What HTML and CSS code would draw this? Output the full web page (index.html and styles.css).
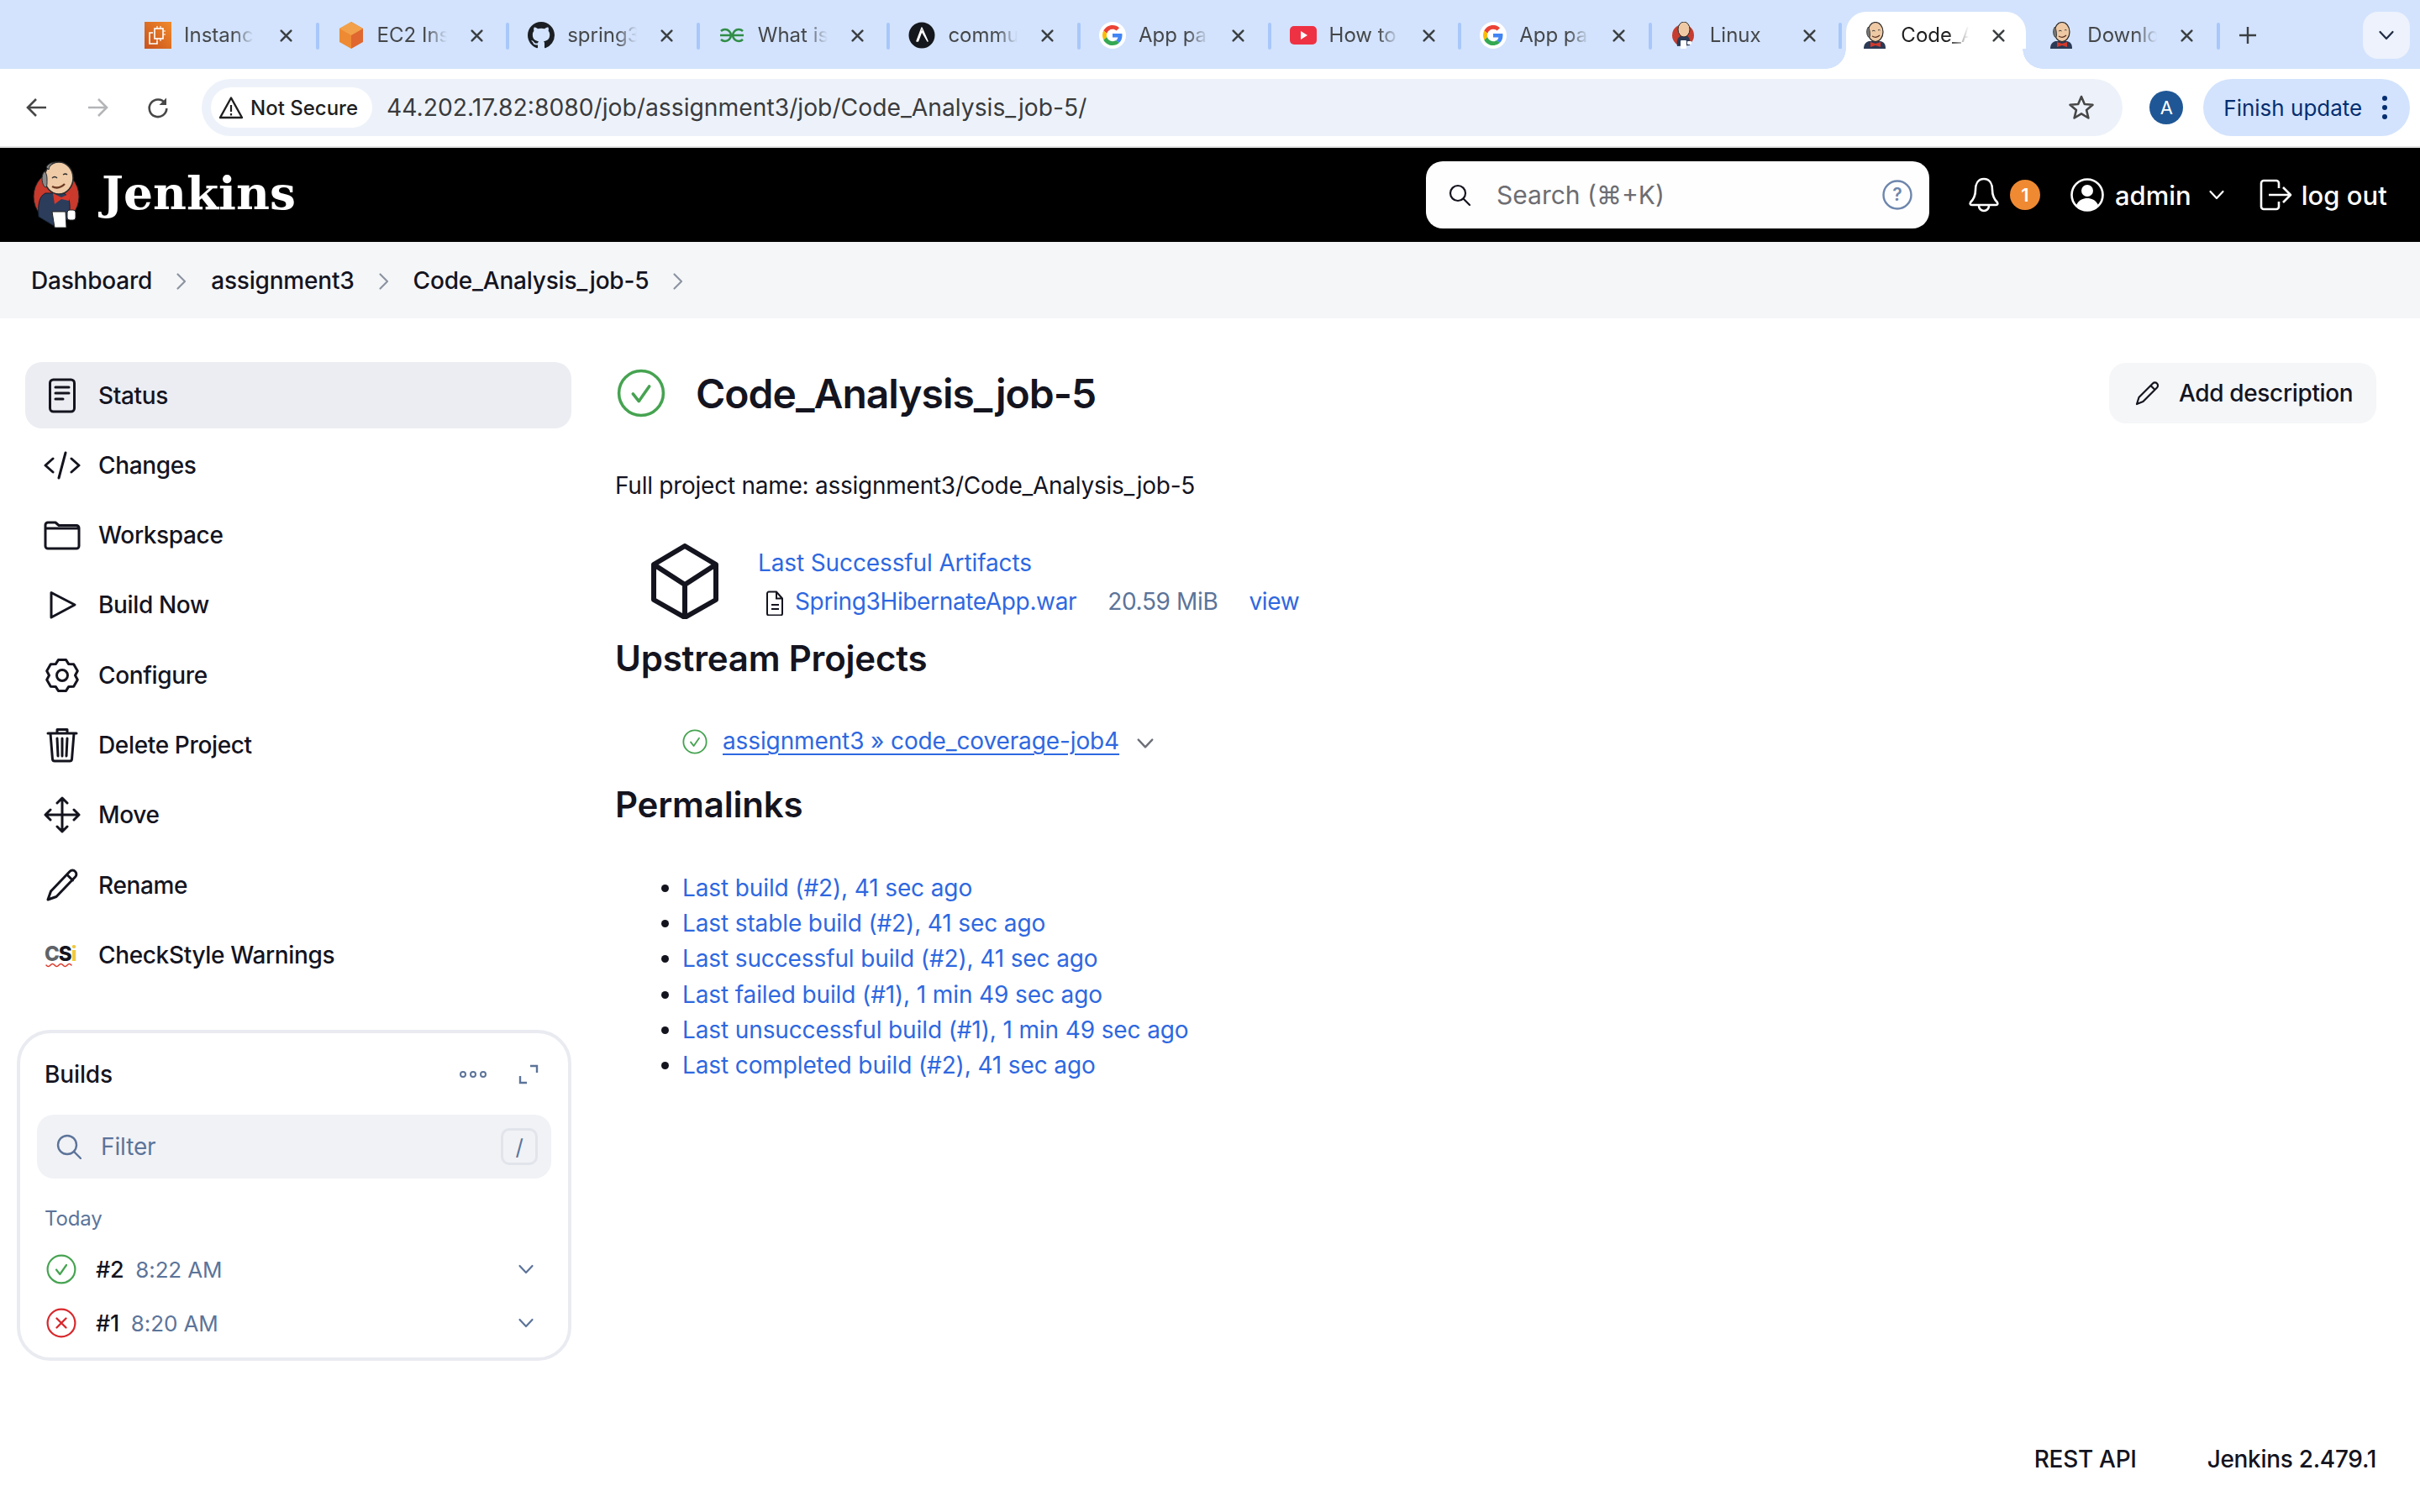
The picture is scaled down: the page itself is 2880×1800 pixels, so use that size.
FILE: index.html
```html
<!DOCTYPE html>
<html lang="en">
<head>
<meta charset="utf-8">
<title>Code_Analysis_job-5 - Jenkins</title>
<link rel="stylesheet" href="styles.css">
</head>
<body>
<svg class="defs" width="0" height="0" aria-hidden="true">
  <symbol id="butler-face" viewBox="0 0 32 32">
    <path d="M3 32c0-6 3-8 6-9h14c4 1 6 3 6 9z" fill="#2b3a55"/>
    <ellipse cx="17" cy="12" rx="9" ry="11.500" fill="#eec9a4" stroke="#2a2a2a" stroke-width="1.200"/>
    <path d="M8.500 6c-2.500 3-2.500 9 0 12 1 1 2 0 2-2 0-4-.5-7-2-10z" fill="#777" stroke="#2a2a2a" stroke-width=".8"/>
    <path d="M13 11q2-1.500 3.500 0M20 10q1.500-1 2.500 0" fill="none" stroke="#2a2a2a" stroke-width=".9"/>
    <path d="M13 17q5 3 9-1" fill="none" stroke="#5a3020" stroke-width="1.200"/>
    <path d="M11 24l6 2 6-2v6l-6-2-6 2z" fill="#d33a2c"/>
  </symbol>
  <symbol id="butler-red" viewBox="0 0 32 32">
    <ellipse cx="15" cy="16" rx="13" ry="13" fill="#c53d30"/>
    <path d="M8 29c-1-5 0-10 4-12h8c3 2 4 6 3 11z" fill="#2b3a55"/>
    <ellipse cx="16" cy="9" rx="7" ry="9" fill="#eec9a4" stroke="#2a2a2a"/>
    <rect x="12" y="22" width="7" height="10" rx="1" fill="#fff"/>
    <rect x="20" y="23" width="5" height="4" rx="1" fill="#fff"/>
  </symbol>
  <symbol id="google" viewBox="-8 -8 64 64">
    <circle cx="24" cy="24" r="32" fill="#fff"/>
    <path fill="#EA4335" d="M24 9.5c3.54 0 6.71 1.22 9.21 3.6l6.85-6.85C35.9 2.38 30.47 0 24 0 14.62 0 6.51 5.38 2.56 13.22l7.98 6.19C12.43 13.72 17.74 9.5 24 9.5z"/>
    <path fill="#4285F4" d="M46.98 24.55c0-1.57-.15-3.09-.38-4.55H24v9.02h12.94c-.58 2.96-2.26 5.48-4.78 7.18l7.73 6c4.51-4.18 7.09-10.36 7.09-17.65z"/>
    <path fill="#FBBC05" d="M10.53 28.59c-.48-1.45-.76-2.99-.76-4.59s.27-3.14.76-4.59l-7.98-6.19C.92 16.46 0 20.12 0 24c0 3.88.92 7.54 2.56 10.78l7.97-6.19z"/>
    <path fill="#34A853" d="M24 48c6.48 0 11.93-2.13 15.89-5.81l-7.73-6c-2.15 1.45-4.92 2.3-8.16 2.3-6.26 0-11.57-4.22-13.47-9.91l-7.98 6.19C6.51 42.62 14.62 48 24 48z"/>
  </symbol>
  <symbol id="ok-circle" viewBox="0 0 36 36">
    <circle cx="18" cy="18" r="16.400" fill="none" stroke="#46a351" stroke-width="2.200"/>
    <path d="M12 18.500l4.300 5.500 7.700-11" fill="none" stroke="#46a351" stroke-width="2.200" stroke-linecap="round" stroke-linejoin="round"/>
  </symbol>
  <symbol id="close-x" viewBox="0 0 16 16">
    <path d="M2.500 2.500l11 11M13.500 2.500l-11 11" fill="none" stroke="#3c4043" stroke-width="2.400" stroke-linecap="round"/>
  </symbol>
  <symbol id="chev" viewBox="0 0 20 20">
    <path d="M2.500 6l7.500 8 7.500-8" fill="none" stroke="currentColor" stroke-width="2.200" stroke-linecap="round" stroke-linejoin="round"/>
  </symbol>
  <symbol id="crumb" viewBox="0 0 14 22">
    <path d="M2.500 2.500L11 11l-8.500 8.500" fill="none" stroke="#8c94a1" stroke-width="2.200" stroke-linecap="round" stroke-linejoin="round"/>
  </symbol>
</svg>

<div class="tabstrip">
  <div class="tab tab-first"><svg class="fav" viewBox="0 0 32 32"><defs><linearGradient id="aws" x1="0" y1="1" x2="1" y2="0"><stop offset="0" stop-color="#c8511b"/><stop offset="1" stop-color="#f08a2c"/></linearGradient></defs><rect width="32" height="32" fill="url(#aws)"/><rect x="12" y="8" width="10" height="12" fill="none" stroke="#fff" stroke-width="1.600"/><path d="M15 5v3M19 5v3M15 20v3M19 20v3M22 11h3M22 15h3" stroke="#fff" stroke-width="1.200"/><path d="M10 13H6v13h9v-3" fill="none" stroke="#fff" stroke-width="1.600"/></svg><span class="tab-title">Instances</span><svg class="tab-x"><use href="#close-x"/></svg></div>
  <div class="tab"><svg class="fav" viewBox="0 0 32 32"><path d="M16 0l14 8v16l-14 8z" fill="#e0672f"/><path d="M16 0L2 8v16l14 8z" fill="#ee8a33"/><path d="M16 0l14 8-14 8L2 8z" fill="#f2a14a"/></svg><span class="tab-title">EC2 Instances</span><svg class="tab-x"><use href="#close-x"/></svg></div>
  <div class="tab"><svg class="fav" viewBox="0 0 16 16"><path fill="#1b1f24" d="M8 0C3.58 0 0 3.58 0 8c0 3.54 2.29 6.53 5.47 7.59.4.07.55-.17.55-.38 0-.19-.01-.82-.01-1.49-2.01.37-2.53-.49-2.69-.94-.09-.23-.48-.94-.82-1.13-.28-.15-.68-.52-.01-.53.63-.01 1.08.58 1.23.82.72 1.21 1.87.87 2.33.66.07-.52.28-.87.51-1.07-1.78-.2-3.64-.89-3.64-3.95 0-.87.31-1.59.82-2.15-.08-.2-.36-1.02.08-2.12 0 0 .67-.21 2.2.82.64-.18 1.32-.27 2-.27.68 0 1.36.09 2 .27 1.53-1.04 2.2-.82 2.2-.82.44 1.1.16 1.92.08 2.12.51.56.82 1.27.82 2.15 0 3.07-1.87 3.75-3.65 3.95.29.25.54.73.54 1.48 0 1.07-.01 1.93-.01 2.2 0 .21.15.46.55.38A8.013 8.013 0 0016 8c0-4.42-3.58-8-8-8z"/></svg><span class="tab-title">spring3-mvc</span><svg class="tab-x"><use href="#close-x"/></svg></div>
  <div class="tab"><svg class="fav" viewBox="0 0 32 32"><path d="M2 16H30M3 11A7 7 0 1 1 3 21M29 11A7 7 0 1 0 29 21" fill="none" stroke="#2f8d46" stroke-width="2.600"/></svg><span class="tab-title">What is Ansible</span><svg class="tab-x"><use href="#close-x"/></svg></div>
  <div class="tab"><svg class="fav" viewBox="0 0 32 32"><circle cx="16" cy="16" r="15.500" fill="#14171c"/><path d="M16 7l-6 16 1.500 0 4.500-12 7 12z" fill="none" stroke="#fff" stroke-width="1.500" stroke-linejoin="round"/></svg><span class="tab-title">community</span><svg class="tab-x"><use href="#close-x"/></svg></div>
  <div class="tab"><svg class="fav"><use href="#google"/></svg><span class="tab-title">App passwords</span><svg class="tab-x"><use href="#close-x"/></svg></div>
  <div class="tab"><svg class="fav" viewBox="0 0 32 32"><rect y="5" width="32" height="22" rx="5" fill="#ee3243"/><path d="M13 11l8 5-8 5z" fill="#fff"/></svg><span class="tab-title">How to create</span><svg class="tab-x"><use href="#close-x"/></svg></div>
  <div class="tab"><svg class="fav"><use href="#google"/></svg><span class="tab-title">App passwords</span><svg class="tab-x"><use href="#close-x"/></svg></div>
  <div class="tab"><svg class="fav"><use href="#butler-red"/></svg><span class="tab-title">Linux</span><svg class="tab-x"><use href="#close-x"/></svg></div>
  <div class="tab tab-active"><svg class="fav"><use href="#butler-face"/></svg><span class="tab-title">Code_Analysis</span><svg class="tab-x"><use href="#close-x"/></svg></div>
  <div class="tab tab-last"><svg class="fav"><use href="#butler-face"/></svg><span class="tab-title">Download</span><svg class="tab-x"><use href="#close-x"/></svg></div>
  <svg class="new-tab" viewBox="0 0 22 22"><path d="M11 1v20M1 11h20" stroke="#3c4043" stroke-width="2.400"/></svg>
  <div class="tab-menu"><svg class="tab-menu-icon"><use href="#chev"/></svg></div>
</div>

<div class="toolbar">
  <svg class="tool-icon" viewBox="0 0 28 28"><path d="M25 14H4M13 4L3 14l10 10" fill="none" stroke="#474747" stroke-width="2.600"/></svg>
  <svg class="tool-icon tool-off" viewBox="0 0 28 28"><path d="M3 14h21M15 4l10 10-10 10" fill="none" stroke="#b3b5b8" stroke-width="2.600"/></svg>
  <svg class="tool-icon" viewBox="0 0 28 28"><path d="M22.500 9A10.300 10.300 0 1 0 24.300 15" fill="none" stroke="#474747" stroke-width="2.600"/><path d="M24 2.500v8.500h-8.500z" fill="#474747"/></svg>
  <div class="omnibox">
    <div class="chip"><svg class="warn" viewBox="0 0 30 28"><path d="M15 2.500L28 26H2z" fill="none" stroke="#1f1f1f" stroke-width="2.400" stroke-linejoin="round"/><path d="M15 11v8M15 21v2.500" stroke="#1f1f1f" stroke-width="2.200"/></svg>Not Secure</div>
    <span class="url">44.202.17.82:8080/job/assignment3/job/Code_Analysis_job-5/</span>
    <svg class="star" viewBox="0 0 32 32"><path d="M16 3l3.800 9 9.700.8-7.400 6.300 2.300 9.400L16 23.400 7.600 28.500l2.300-9.400L2.500 12.800l9.700-.8z" fill="none" stroke="#474747" stroke-width="2.600" stroke-linejoin="round"/></svg>
  </div>
  <div class="avatar">A</div>
  <div class="finish"><span>Finish update</span><svg class="kebab" viewBox="0 0 8 32"><circle cx="4" cy="5" r="3"/><circle cx="4" cy="16" r="3"/><circle cx="4" cy="27" r="3"/></svg></div>
</div>

<header class="jk-header">
  <div class="brand">
    <svg class="brand-logo" viewBox="0 0 60 84">
      <ellipse cx="29" cy="44" rx="27" ry="30" fill="#c9392c" stroke="#222" stroke-width="1"/>
      <path d="M8 68c-1-14 0-24 8-28h22c8 4 8 16 6 30l-16 10z" fill="#2c3d5c" stroke="#15202f"/>
      <ellipse cx="32" cy="22" rx="17" ry="19" fill="#efcba8" stroke="#2b2b2b" stroke-width="1.600"/>
      <path d="M15 14c-5 5-3 17 1 19 2 0 2-4 2-8s0-8-3-11zM17 9c3-5 8-6 12-6-5 1-8 3-9 9z" fill="#8a8a8a" stroke="#2b2b2b"/>
      <path d="M24 22q3-3 6 0M37 18q3-2 5 0" fill="none" stroke="#2b2b2b" stroke-width="1.300"/>
      <path d="M24 32q8 4 15-3" fill="none" stroke="#6b3a22" stroke-width="2.400"/>
      <path d="M25 40l10 5 11-5-2 9-9-2-8 6z" fill="#d8392b"/>
      <path d="M24 62h16l1 19H27z" fill="#fff" stroke="#222"/>
      <rect x="42" y="60" width="10" height="12" rx="3" fill="#fff" stroke="#222"/>
    </svg>
    <span class="brand-name">Jenkins</span>
  </div>
  <div class="header-search">
    <svg class="hs-icon" viewBox="0 0 28 28"><circle cx="12" cy="12" r="9" fill="none" stroke="#14141f" stroke-width="2.200"/><path d="M19 19l7 7" stroke="#14141f" stroke-width="2.200" stroke-linecap="round"/></svg>
    <span class="hs-text">Search (⌘+K)</span>
    <svg class="hs-help" viewBox="0 0 36 36"><circle cx="18" cy="18" r="16.500" fill="none" stroke="#6d86ad" stroke-width="2.400"/><text x="18" y="25" class="hs-q">?</text></svg>
  </div>
  <svg class="bell" viewBox="0 0 40 44"><path d="M20 3c-7 0-10 6-10 13 0 8-3 12-6 15-1 2 0 3 2 3h28c2 0 3-1 2-3-3-3-6-7-6-15 0-7-3-13-10-13z" fill="none" stroke="#fff" stroke-width="2.600" stroke-linejoin="round"/><path d="M14 35a6 6 0 0 0 12 0" fill="none" stroke="#fff" stroke-width="2.600"/></svg>
  <span class="badge">1</span>
  <svg class="user" viewBox="0 0 40 40"><circle cx="20" cy="20" r="18.500" fill="none" stroke="#fff" stroke-width="2.600"/><circle cx="20" cy="15" r="7" fill="#fff"/><path d="M7 32c3-6 8-8 13-8s10 2 13 8c-3 4-8 6-13 6s-10-2-13-6z" fill="#fff"/></svg>
  <span class="user-name">admin</span>
  <svg class="user-chev"><use href="#chev"/></svg>
  <svg class="logout" viewBox="0 0 40 40"><path d="M24 12V6a3 3 0 0 0-3-3H6a3 3 0 0 0-3 3v28a3 3 0 0 0 3 3h15a3 3 0 0 0 3-3v-6" fill="none" stroke="#fff" stroke-width="2.600"/><path d="M12 20h26M29 11l9 9-9 9" fill="none" stroke="#fff" stroke-width="2.600" stroke-linejoin="round"/></svg>
  <span class="logout-text">log out</span>
</header>

<nav class="breadcrumbs">
  <span class="bc-item bc-first">Dashboard</span><svg class="bc-sep"><use href="#crumb"/></svg>
  <span class="bc-item">assignment3</span><svg class="bc-sep"><use href="#crumb"/></svg>
  <span class="bc-item">Code_Analysis_job-5</span><svg class="bc-sep"><use href="#crumb"/></svg>
</nav>

<div class="page">
  <aside class="side">
    <ul class="tasks">
      <li class="task task-on"><svg class="task-icon" viewBox="0 0 44 44"><rect x="7.500" y="3" width="29" height="38" rx="4"/><path d="M14 12h16M14 19h16M14 26h9"/></svg>Status</li>
      <li class="task"><svg class="task-icon" viewBox="0 0 44 44"><path d="M11 14l-9 8 9 8M33 14l9 8-9 8M26 7l-8 30"/></svg>Changes</li>
      <li class="task"><svg class="task-icon" viewBox="0 0 44 44"><path d="M2 10a3 3 0 0 1 3-3h9l4 3.500h21a3 3 0 0 1 3 3V35a3 3 0 0 1-3 3H5a3 3 0 0 1-3-3zM2 14h40"/></svg>Workspace</li>
      <li class="task"><svg class="task-icon" viewBox="0 0 44 44"><path d="M9 7.500L37 22 9 37z"/></svg>Build Now</li>
      <li class="task"><svg class="task-icon" viewBox="0 0 44 44"><path d="M17.400 3.600h9.200l3.150 5 5.950.2 4.600 8-2.800 5.200 2.800 5.200-4.600 8-5.950.2-3.150 5h-9.200l-3.150-5-5.950-.2-4.600-8 2.800-5.200-2.800-5.200 4.600-8 5.950-.2z"/><circle cx="22" cy="22" r="6.500"/></svg>Configure</li>
      <li class="task"><svg class="task-icon" viewBox="0 0 44 44"><path d="M5 8h34M16 8V3.500h12V8M8 8l2.500 31a2.500 2.500 0 0 0 2.500 2h18a2.500 2.500 0 0 0 2.500-2L36 8M16 14l1 21M22 14v21M28 14l-1 21"/></svg>Delete Project</li>
      <li class="task"><svg class="task-icon" viewBox="0 0 44 44"><path d="M22 2v40M2 22h40M16 8l6-6 6 6M16 36l6 6 6-6M8 16l-6 6 6 6M36 16l6 6-6 6"/></svg>Move</li>
      <li class="task"><svg class="task-icon" viewBox="0 0 44 44"><path d="M5 39l3.500-10L31 5.500a4.500 4.500 0 0 1 6.500 0 4.500 4.500 0 0 1 0 6.500L15 35.500zM27.500 9l7 7"/></svg>Rename</li>
      <li class="task"><svg class="task-icon task-csi" viewBox="0 0 44 44"><text x="1" y="29" class="csi-text"><tspan class="csi-c">C</tspan><tspan class="csi-s">S</tspan><tspan class="csi-i">i</tspan></text><path d="M3 34q2.500 3 5 0t5 0 5 0 5 0 5 0 5 0" class="csi-wave"/></svg>CheckStyle Warnings</li>
    </ul>

    <section class="builds">
      <div class="builds-head">
        <span class="builds-title">Builds</span>
        <svg class="dots" viewBox="0 0 32 10"><circle cx="4" cy="5" r="3"/><circle cx="16" cy="5" r="3"/><circle cx="28" cy="5" r="3"/></svg>
        <svg class="expand" viewBox="0 0 24 24"><path d="M14 2h8v8M2 14v8h8"/></svg>
      </div>
      <div class="filter">
        <svg class="filter-icon" viewBox="0 0 30 30"><circle cx="13" cy="13" r="11"/><path d="M21 21l8 8"/></svg>
        <span class="filter-text">Filter</span>
        <span class="slash">/</span>
      </div>
      <div class="today">Today</div>
      <div class="build-row"><svg class="build-status"><use href="#ok-circle"/></svg><span class="build-no">#2</span><span class="build-time">8:22 AM</span><svg class="build-chev"><use href="#chev"/></svg></div>
      <div class="build-row"><svg class="build-status" viewBox="0 0 36 36"><circle cx="18" cy="18" r="16.400" fill="none" stroke="#d8282c" stroke-width="2.200"/><path d="M12.500 12.500l11 11M23.500 12.500l-11 11" stroke="#d8282c" stroke-width="2.400" stroke-linecap="round"/></svg><span class="build-no">#1</span><span class="build-time">8:20 AM</span><svg class="build-chev"><use href="#chev"/></svg></div>
    </section>
  </aside>

  <main class="main">
    <div class="job-head">
      <svg class="job-status"><use href="#ok-circle"/></svg>
      <h1 class="job-title">Code_Analysis_job-5</h1>
      <div class="add-desc"><svg class="add-icon" viewBox="0 0 32 32"><path d="M3 29l2.500-8L22 4.500a3.500 3.500 0 0 1 5 0 3.500 3.500 0 0 1 0 5L10.500 26zM19.500 7l5 5" fill="none" stroke="#14141f" stroke-width="2.200" stroke-linejoin="round"/></svg>Add description</div>
    </div>
    <p class="full-name">Full project name: assignment3/Code_Analysis_job-5</p>
    <div class="artifacts">
      <svg class="art-icon" viewBox="0 0 86 90"><path d="M43 3L80 25V67L43 88 6 67V25zM6 25l37 24 37-24M43 49v39" fill="none" stroke="#14141f" stroke-width="6" stroke-linejoin="round"/></svg>
      <div class="art-body">
        <a class="lnk">Last Successful Artifacts</a>
        <div class="art-file">
          <svg class="file-icon" viewBox="0 0 24 30"><path d="M3 3.500a2 2 0 0 1 2-2h9l7 8v18a2 2 0 0 1-2 2H5a2 2 0 0 1-2-2zM14 1.500v8h7M8 17h9M8 22h9" fill="none" stroke="#14141f" stroke-width="2"/></svg>
          <a class="lnk">Spring3HibernateApp.war</a>
          <span class="art-size">20.59 MiB</span>
          <a class="lnk">view</a>
        </div>
      </div>
    </div>
    <h2 class="sec-title sec-up">Upstream Projects</h2>
    <div class="up-row">
      <svg class="up-status"><use href="#ok-circle"/></svg>
      <a class="lnk lnk-u">assignment3 » code_coverage-job4</a>
      <svg class="up-chev"><use href="#chev"/></svg>
    </div>
    <h2 class="sec-title sec-perm">Permalinks</h2>
    <ul class="perm">
      <li><a class="lnk">Last build (#2), 41 sec ago</a></li>
      <li><a class="lnk">Last stable build (#2), 41 sec ago</a></li>
      <li><a class="lnk">Last successful build (#2), 41 sec ago</a></li>
      <li><a class="lnk">Last failed build (#1), 1 min 49 sec ago</a></li>
      <li><a class="lnk">Last unsuccessful build (#1), 1 min 49 sec ago</a></li>
      <li><a class="lnk">Last completed build (#2), 41 sec ago</a></li>
    </ul>
  </main>
</div>

<footer class="foot"><span>REST API</span><span>Jenkins 2.479.1</span></footer>
</body>
</html>
```

FILE: styles.css
```css
* { box-sizing: border-box; }
html, body { margin: 0; height: 1800px; overflow: hidden; }
body {
  display: flex;
  flex-direction: column;
  background: #fff;
  color: #14141f;
  font-family: Inter, "Liberation Sans", sans-serif;
  font-size: 28px;
  letter-spacing: -0.12px;
}
.defs { position: absolute; }
svg { display: block; flex: none; }
a { color: inherit; }

/* Tab strip */
.tabstrip {
  height: 82px;
  flex: none;
  display: flex;
  align-items: flex-start;
  padding: 14px 12px 0 155px;
  background: #d3e3fd;
  letter-spacing: 0;
}
.tab {
  position: relative;
  width: 226.600px;
  height: 68px;
  flex: none;
  display: flex;
  align-items: center;
  padding: 0 20px 12px 20px;
  color: #45474a;
  font-size: 24px;
  border-right: 4px solid transparent;
}
.tab-first { padding-left: 17px; }
.tab-first .tab-x { margin-left: 30px; }
.tab::after {
  content: "";
  position: absolute;
  right: -2px;
  top: 13px;
  width: 4px;
  height: 32px;
  border-radius: 2px;
  background: #a8c7fa;
}
.tab-active {
  background: #fff;
  border-radius: 24px 24px 0 0;
  color: #1f1f1f;
  width: 214px;
  margin: 0 6px 0 3px;
  padding-left: 18px;
}
.tab-active::after { display: none; }
.tab-active::before {
  content: "";
  position: absolute;
  left: -24px;
  right: -24px;
  bottom: 0;
  height: 24px;
  background:
    radial-gradient(circle at 0 0, #d3e3fd 23.500px, #fff 24px) left bottom / 24px 24px no-repeat,
    radial-gradient(circle at 100% 0, #d3e3fd 23.500px, #fff 24px) right bottom / 24px 24px no-repeat;
  z-index: 0;
}
.fav { width: 32px; height: 32px; margin-right: 15px; }
.tab-title {
  width: 83px;
  margin-top: -2px;
  overflow: hidden;
  white-space: nowrap;
  -webkit-mask-image: linear-gradient(90deg, #000 70%, transparent 100%);
  mask-image: linear-gradient(90deg, #000 70%, transparent 100%);
}
.tab-x { width: 17px; height: 17px; margin-left: 27px; }
.new-tab { width: 22px; height: 22px; margin: 17px 0 0 20px; }
.tab-menu {
  margin-left: auto;
  width: 56px;
  height: 56px;
  display: flex;
  align-items: center;
  justify-content: center;
  border-radius: 18px;
  background: #edf2fc;
  color: #1f2a44;
}
.tab-menu-icon { width: 20px; height: 20px; }

/* Toolbar */
.toolbar {
  height: 94px;
  flex: none;
  display: flex;
  align-items: center;
  padding: 0 12px 0 30px;
  background: #fff;
  border-bottom: 2px solid #e3e3e3;
  letter-spacing: 0;
}
.tool-icon { width: 28px; height: 28px; margin-right: 44px; }
.omnibox {
  width: 2290px;
  height: 68px;
  margin-left: -6px;
  display: flex;
  align-items: center;
  padding: 0 33px 0 11px;
  border-radius: 34px;
  background: #edf2fa;
}
.chip {
  height: 48px;
  width: 192px;
  display: flex;
  align-items: center;
  gap: 8px;
  padding-left: 9px;
  border-radius: 24px;
  background: #fff;
  color: #1f1f1f;
  font-size: 24px;
  font-weight: 500;
}
.warn { width: 30px; height: 28px; }
.url { margin-left: 17px; font-size: 28.250px; color: #3a3b3d; }
.star { width: 32px; height: 32px; margin-left: auto; }
.avatar {
  width: 40px;
  height: 40px;
  margin-left: 32px;
  display: flex;
  align-items: center;
  justify-content: center;
  border-radius: 50%;
  background: #1f5796;
  color: #fff;
  font-size: 22px;
}
.finish {
  width: 246px;
  height: 68px;
  margin-left: 24px;
  display: flex;
  align-items: center;
  justify-content: space-between;
  padding: 0 26px 0 24px;
  border-radius: 34px;
  background: #d3e3fd;
  color: #062e6f;
  font-size: 26px;
}
.kebab { width: 8px; height: 32px; fill: #062e6f; }

/* Jenkins header */
.jk-header {
  height: 112px;
  flex: none;
  display: flex;
  align-items: center;
  padding-left: 38px;
  background: #000;
  color: #fff;
  letter-spacing: 0;
}
.brand { display: flex; align-items: center; gap: 23px; width: 1659px; }
.brand-logo { width: 60px; height: 84px; }
.brand-name {
  margin-top: -5px;
  font-family: "DejaVu Serif", serif;
  font-weight: 700;
  font-size: 55px;
  line-height: 1;
}
.header-search {
  width: 599px;
  height: 80px;
  display: flex;
  align-items: center;
  padding: 0 20px 0 26px;
  border-radius: 20px;
  background: #fefefe;
  color: #6d6d72;
}
.hs-icon { width: 28px; height: 28px; }
.hs-text { margin-left: 30px; font-size: 30px; }
.hs-help { width: 36px; height: 36px; margin-left: auto; }
.hs-q { font: 600 21px Inter, sans-serif; fill: #6d86ad; text-anchor: middle; }
.bell { width: 40px; height: 44px; margin-left: 45px; }
.badge {
  width: 36px;
  height: 36px;
  margin-left: 11px;
  display: flex;
  align-items: center;
  justify-content: center;
  border-radius: 50%;
  background: #ef8a33;
  font-size: 22px;
  font-weight: 600;
}
.user { width: 40px; height: 40px; margin-left: 36px; }
.user-name { margin-left: 13px; font-size: 31px; font-weight: 500; }
.user-chev { width: 20px; height: 20px; margin-left: 20px; }
.logout { width: 40px; height: 40px; margin-left: 40px; }
.logout-text { margin-left: 11px; font-size: 31px; font-weight: 500; }

/* Breadcrumbs */
.breadcrumbs {
  height: 91px;
  flex: none;
  display: flex;
  align-items: center;
  padding-left: 37px;
  background: #f5f6f8;
  font-weight: 500;
  letter-spacing: -0.2px;
}
.bc-sep { width: 14px; height: 22px; margin: 2px 28px 0 28px; }

/* Page */
.page {
  flex: 1;
  min-height: 0;
  display: grid;
  grid-template-columns: 660px 1fr;
  column-gap: 52px;
  padding: 52px 52px 0 20px;
}
.tasks {
  list-style: none;
  margin: 0 0 0 10px;
  padding: 0;
  display: flex;
  flex-direction: column;
  gap: 4.300px;
}
.task {
  height: 79px;
  display: flex;
  align-items: center;
  gap: 21px;
  padding-left: 22px;
  border-radius: 20px;
  font-weight: 500;
  letter-spacing: -0.35px;
}
.task-on { background: #ecedf2; }
.task-icon {
  width: 44px;
  height: 44px;
  fill: none;
  stroke: #14141f;
  stroke-width: 3;
  stroke-linejoin: round;
  stroke-linecap: round;
}
.task-csi { stroke: none; }
.csi-text { font: 800 24px Inter, sans-serif; letter-spacing: -1px; }
.csi-c { fill: #5f6368; }
.csi-s { fill: #14141f; }
.csi-i { fill: #efc83f; }
.csi-wave { fill: none; stroke: #d8392b; stroke-width: 1.500; }

/* Builds card */
.builds {
  height: 394px;
  margin-top: 50px;
  padding: 0 20px;
  border: 4px solid #e9ebf1;
  border-radius: 40px;
}
.builds-head {
  height: 97px;
  display: flex;
  align-items: center;
  padding: 0 15px 0 9px;
  font-weight: 500;
}
.builds-title { margin-right: auto; }
.dots {
  width: 32px;
  height: 10px;
  margin-right: 38px;
  fill: none;
  stroke: #5c7499;
  stroke-width: 2;
}
.expand {
  width: 24px;
  height: 24px;
  fill: none;
  stroke: #5c7499;
  stroke-width: 2.400;
}
.filter {
  height: 76px;
  display: flex;
  align-items: center;
  padding: 0 16px 0 23px;
  border-radius: 20px;
  background: #f1f2f6;
  color: #5c7499;
}
.filter-icon {
  width: 30px;
  height: 30px;
  fill: none;
  stroke: #5c7499;
  stroke-width: 2.400;
  stroke-linecap: round;
}
.filter-text { margin-left: 23px; }
.slash {
  width: 44px;
  height: 44px;
  margin-left: auto;
  display: flex;
  align-items: center;
  justify-content: center;
  border: 3px solid #e2e4ec;
  border-radius: 10px;
  font-size: 26px;
}
.today {
  margin: 31px 0 11px 9px;
  height: 34px;
  line-height: 34px;
  color: #5c7499;
  font-size: 24px;
}
.build-row {
  height: 64px;
  display: flex;
  align-items: center;
  padding-left: 11px;
}
.build-status { width: 36px; height: 36px; }
.build-no { margin-left: 23px; font-size: 27px; font-weight: 500; letter-spacing: -0.3px; }
.build-time { margin-left: 14px; font-size: 26px; color: #5c7499; }
.build-chev { width: 20px; height: 20px; margin: 0 20px 0 auto; color: #5c7499; }

/* Main */
.job-head { height: 74px; display: flex; align-items: center; }
.job-status { width: 58px; height: 58px; margin: 0 36px 0 2px; }
.job-title { margin: 0; font-size: 48px; font-weight: 600; letter-spacing: -1px; }
.add-desc {
  width: 318px;
  height: 72px;
  margin-left: auto;
  display: flex;
  align-items: center;
  gap: 21px;
  padding-left: 30px;
  border-radius: 20px;
  background: #f5f6f8;
  font-weight: 500;
  letter-spacing: -0.35px;
}
.add-icon { width: 32px; height: 32px; }
.full-name { margin: 55px 0 0; line-height: 36px; letter-spacing: -0.25px; }
.artifacts { display: flex; gap: 44px; margin-top: 51px; padding-left: 40px; }
.art-icon { width: 86px; height: 90px; }
.art-body { line-height: 46px; }
.lnk { color: #2e68e0; }
.lnk-u { text-decoration: underline; text-underline-offset: 5px; text-decoration-thickness: 2px; }
.art-file { display: flex; align-items: center; padding-left: 8px; letter-spacing: -0.35px; }
.file-icon { width: 24px; height: 30px; margin: 4px 12px 0 0; }
.art-size { margin: 0 37px; color: #5c7499; }
.sec-title { margin: 0; font-size: 42px; font-weight: 600; line-height: 56px; letter-spacing: -0.2px; }
.sec-up { margin-top: 17px; }
.up-row { height: 40px; margin-top: 50px; padding-left: 80px; display: flex; align-items: center; }
.up-status { width: 30px; height: 30px; margin: 2px 18px 0 0; }
.up-chev { width: 22px; height: 22px; margin: 6px 0 0 20px; color: #6d7078; }
.sec-perm { margin-top: 28px; }
.perm { margin: 50px 0 0; padding: 0 0 0 80px; line-height: 42.200px; }

/* Footer */
.foot {
  position: absolute;
  right: 52px;
  top: 1719px;
  display: flex;
  gap: 84px;
  line-height: 36px;
  font-size: 28px;
  font-weight: 500;
  letter-spacing: -0.3px;
}
```
